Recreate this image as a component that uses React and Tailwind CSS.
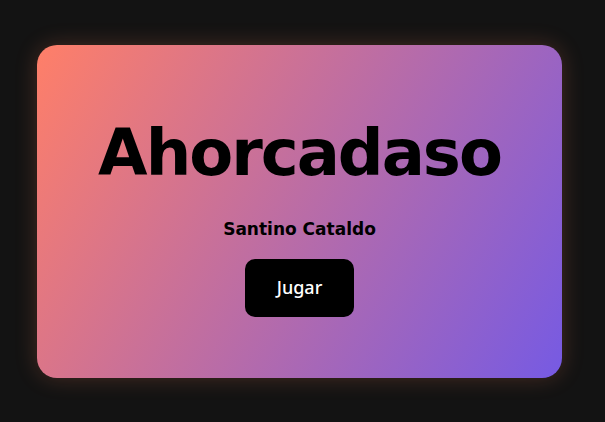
export default function App() {
  return (
    <div className="min-h-screen w-full bg-[#131313] flex items-center justify-center font-['DejaVu_Sans',sans-serif]">
      <div className="w-[525px] h-[333px] -ml-[6px] rounded-[20px] bg-[linear-gradient(120deg,#ff7f68_0%,#765ae3_100%)] shadow-[0_0_22px_rgba(255,130,90,0.22)] flex flex-col items-center pt-[68px]">
        <h1 className="text-[64px] leading-[80px] font-bold text-black tracking-[-2px]">Ahorcadaso</h1>
        <p className="mt-[24px] text-[17px] leading-[24px] font-bold text-black">Santino Cataldo</p>
        <button className="mt-[18px] w-[109px] h-[58px] rounded-[10px] bg-black text-white text-[18px] font-medium font-['Noto_Sans',sans-serif]">
          Jugar
        </button>
      </div>
    </div>
  );
}
